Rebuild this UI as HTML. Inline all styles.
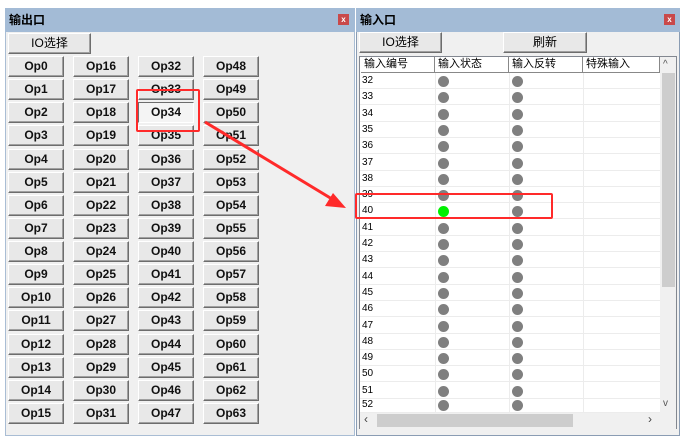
<!DOCTYPE html>
<html><head><meta charset="utf-8"><style>
*{margin:0;padding:0;box-sizing:border-box}
html,body{width:690px;height:446px;overflow:hidden}
body{background:#fff;position:relative;font-family:"Liberation Sans","Noto Sans CJK SC",sans-serif}
.a{position:absolute}
.win{position:absolute;background:#f0f0f0;border:1px solid #a9bdd4}
.x{position:absolute;width:11px;height:11px;background:#c9494a;color:#fff;font-size:8px;line-height:11px;text-align:center;font-weight:bold}
.btn{position:absolute;width:56px;height:21px;background:#e8e8e8;border:1px solid;border-color:#fff #6d6d6d #6d6d6d #fff;box-shadow:inset -1px -1px #a0a0a0;font-weight:bold;font-size:12px;text-align:center;line-height:19px;color:#111}
.wb{position:absolute;height:21px;background:#e8e8e8;border:1px solid;border-color:#fff #6d6d6d #6d6d6d #fff;box-shadow:inset -1px -1px #a0a0a0;font-size:12px;text-align:center;line-height:19px}
.r{position:absolute;left:360px;width:300px;height:16px;border-bottom:1px solid #ececec;font-size:10px;line-height:16px;padding-left:2px;color:#000}
.d{position:absolute;top:3px;width:11px;height:11px;border-radius:50%;background:#7f7f7f}
.d1{left:78px}.d2{left:152px}
.h{position:absolute;top:57px;height:16px;font-size:11px;line-height:15px;padding-left:3px;border-right:1px solid #888;border-bottom:1px solid #888;background:#fff}
</style></head><body>

<div class="win" style="left:5px;top:8px;width:350px;height:428px"></div>
<div class="a" style="left:5px;top:8px;width:350px;height:24px;background:#a3bbd6"></div>
<div class="a" style="left:9px;top:9px;font-size:12px;font-weight:bold;line-height:22px">输出口</div>
<div class="x" style="left:338px;top:14px">x</div>
<div class="wb" style="left:8px;top:33px;width:83px">IO选择</div>

<div class="btn" style="left:8px;top:56px">Op0</div><div class="btn" style="left:73px;top:56px">Op16</div><div class="btn" style="left:138px;top:56px">Op32</div><div class="btn" style="left:203px;top:56px">Op48</div>
<div class="btn" style="left:8px;top:79px">Op1</div><div class="btn" style="left:73px;top:79px">Op17</div><div class="btn" style="left:138px;top:79px">Op33</div><div class="btn" style="left:203px;top:79px">Op49</div>
<div class="btn" style="left:8px;top:102px">Op2</div><div class="btn" style="left:73px;top:102px">Op18</div><div class="btn" style="left:138px;top:102px;background:#f4f4f4;border-color:#6d6d6d #fff #fff #6d6d6d;box-shadow:none">Op34</div><div class="btn" style="left:203px;top:102px">Op50</div>
<div class="btn" style="left:8px;top:125px">Op3</div><div class="btn" style="left:73px;top:125px">Op19</div><div class="btn" style="left:138px;top:125px">Op35</div><div class="btn" style="left:203px;top:125px">Op51</div>
<div class="btn" style="left:8px;top:149px">Op4</div><div class="btn" style="left:73px;top:149px">Op20</div><div class="btn" style="left:138px;top:149px">Op36</div><div class="btn" style="left:203px;top:149px">Op52</div>
<div class="btn" style="left:8px;top:172px">Op5</div><div class="btn" style="left:73px;top:172px">Op21</div><div class="btn" style="left:138px;top:172px">Op37</div><div class="btn" style="left:203px;top:172px">Op53</div>
<div class="btn" style="left:8px;top:195px">Op6</div><div class="btn" style="left:73px;top:195px">Op22</div><div class="btn" style="left:138px;top:195px">Op38</div><div class="btn" style="left:203px;top:195px">Op54</div>
<div class="btn" style="left:8px;top:218px">Op7</div><div class="btn" style="left:73px;top:218px">Op23</div><div class="btn" style="left:138px;top:218px">Op39</div><div class="btn" style="left:203px;top:218px">Op55</div>
<div class="btn" style="left:8px;top:241px">Op8</div><div class="btn" style="left:73px;top:241px">Op24</div><div class="btn" style="left:138px;top:241px">Op40</div><div class="btn" style="left:203px;top:241px">Op56</div>
<div class="btn" style="left:8px;top:264px">Op9</div><div class="btn" style="left:73px;top:264px">Op25</div><div class="btn" style="left:138px;top:264px">Op41</div><div class="btn" style="left:203px;top:264px">Op57</div>
<div class="btn" style="left:8px;top:287px">Op10</div><div class="btn" style="left:73px;top:287px">Op26</div><div class="btn" style="left:138px;top:287px">Op42</div><div class="btn" style="left:203px;top:287px">Op58</div>
<div class="btn" style="left:8px;top:310px">Op11</div><div class="btn" style="left:73px;top:310px">Op27</div><div class="btn" style="left:138px;top:310px">Op43</div><div class="btn" style="left:203px;top:310px">Op59</div>
<div class="btn" style="left:8px;top:334px">Op12</div><div class="btn" style="left:73px;top:334px">Op28</div><div class="btn" style="left:138px;top:334px">Op44</div><div class="btn" style="left:203px;top:334px">Op60</div>
<div class="btn" style="left:8px;top:357px">Op13</div><div class="btn" style="left:73px;top:357px">Op29</div><div class="btn" style="left:138px;top:357px">Op45</div><div class="btn" style="left:203px;top:357px">Op61</div>
<div class="btn" style="left:8px;top:380px">Op14</div><div class="btn" style="left:73px;top:380px">Op30</div><div class="btn" style="left:138px;top:380px">Op46</div><div class="btn" style="left:203px;top:380px">Op62</div>
<div class="btn" style="left:8px;top:403px">Op15</div><div class="btn" style="left:73px;top:403px">Op31</div><div class="btn" style="left:138px;top:403px">Op47</div><div class="btn" style="left:203px;top:403px">Op63</div>

<div class="win" style="left:356px;top:8px;width:324px;height:428px;border-color:#8a9cb3"></div>
<div class="a" style="left:356px;top:8px;width:324px;height:24px;background:#a3bbd6"></div>
<div class="a" style="left:360px;top:9px;font-size:12px;font-weight:bold;line-height:22px">输入口</div>
<div class="x" style="left:664px;top:14px">x</div>
<div class="wb" style="left:359px;top:32px;width:83px">IO选择</div>
<div class="wb" style="left:503px;top:32px;width:84px">刷新</div>

<div class="a" style="left:359px;top:56px;width:318px;height:373px;background:#fff;border:1px solid #828790"></div>
<div class="h" style="left:361px;width:74px">输入编号</div>
<div class="h" style="left:435px;width:74px">输入状态</div>
<div class="h" style="left:509px;width:74px">输入反转</div>
<div class="h" style="left:583px;width:77px">特殊输入</div>
<div class="a" style="left:660px;top:57px;width:16px;height:357px;background:#f0f0f0"></div>
<div class="a" style="left:663px;top:59px;font-size:10px;color:#555">^</div>
<div class="a" style="left:662px;top:73px;width:13px;height:214px;background:#cdcdcd"></div>
<div class="a" style="left:663px;top:398px;font-size:10px;color:#555">v</div>
<div class="a" style="left:435px;top:73px;width:1px;height:340px;background:#ececec"></div>
<div class="a" style="left:509px;top:73px;width:1px;height:340px;background:#ececec"></div>
<div class="a" style="left:583px;top:73px;width:1px;height:340px;background:#ececec"></div>

<div class="a" style="left:0;top:73px;width:690px;height:340px;overflow:hidden">
<div style="position:absolute;left:0;top:-73px;width:690px;height:413px">
<div class="r" style="top:73px">32<div class="d d1"></div><div class="d d2"></div></div>
<div class="r" style="top:89px">33<div class="d d1"></div><div class="d d2"></div></div>
<div class="r" style="top:106px">34<div class="d d1"></div><div class="d d2"></div></div>
<div class="r" style="top:122px">35<div class="d d1"></div><div class="d d2"></div></div>
<div class="r" style="top:138px">36<div class="d d1"></div><div class="d d2"></div></div>
<div class="r" style="top:155px">37<div class="d d1"></div><div class="d d2"></div></div>
<div class="r" style="top:171px">38<div class="d d1"></div><div class="d d2"></div></div>
<div class="r" style="top:187px">39<div class="d d1"></div><div class="d d2"></div></div>
<div class="r" style="top:203px">40<div class="d d1" style="background:#00f000"></div><div class="d d2"></div></div>
<div class="r" style="top:220px">41<div class="d d1"></div><div class="d d2"></div></div>
<div class="r" style="top:236px">42<div class="d d1"></div><div class="d d2"></div></div>
<div class="r" style="top:252px">43<div class="d d1"></div><div class="d d2"></div></div>
<div class="r" style="top:269px">44<div class="d d1"></div><div class="d d2"></div></div>
<div class="r" style="top:285px">45<div class="d d1"></div><div class="d d2"></div></div>
<div class="r" style="top:301px">46<div class="d d1"></div><div class="d d2"></div></div>
<div class="r" style="top:318px">47<div class="d d1"></div><div class="d d2"></div></div>
<div class="r" style="top:334px">48<div class="d d1"></div><div class="d d2"></div></div>
<div class="r" style="top:350px">49<div class="d d1"></div><div class="d d2"></div></div>
<div class="r" style="top:366px">50<div class="d d1"></div><div class="d d2"></div></div>
<div class="r" style="top:383px">51<div class="d d1"></div><div class="d d2"></div></div>
<div class="r" style="top:397px;height:16px">52<div class="d d1"></div><div class="d d2"></div></div>
</div></div>

<div class="a" style="left:360px;top:413px;width:300px;height:16px;background:#f0f0f0"></div>
<div class="a" style="left:377px;top:414px;width:196px;height:13px;background:#cdcdcd"></div>
<div class="a" style="left:364px;top:412px;font-size:12px;color:#444">‹</div>
<div class="a" style="left:648px;top:412px;font-size:12px;color:#444">›</div>
<div class="a" style="left:660px;top:413px;width:16px;height:16px;background:#f0f0f0"></div>

<div class="a" style="left:136px;top:89px;width:64px;height:43px;border:2px solid #ff2a2a;border-radius:2px"></div>
<div class="a" style="left:355px;top:193px;width:198px;height:26px;border:2px solid #ff2a2a;border-radius:2px"></div>
<svg class="a" style="left:0;top:0" width="690" height="446">
<line x1="205" y1="122" x2="332" y2="199" stroke="#ff2a2a" stroke-width="3"/>
<polygon points="346,208 325,206 333,193" fill="#ff2a2a"/>
</svg>
</body></html>
